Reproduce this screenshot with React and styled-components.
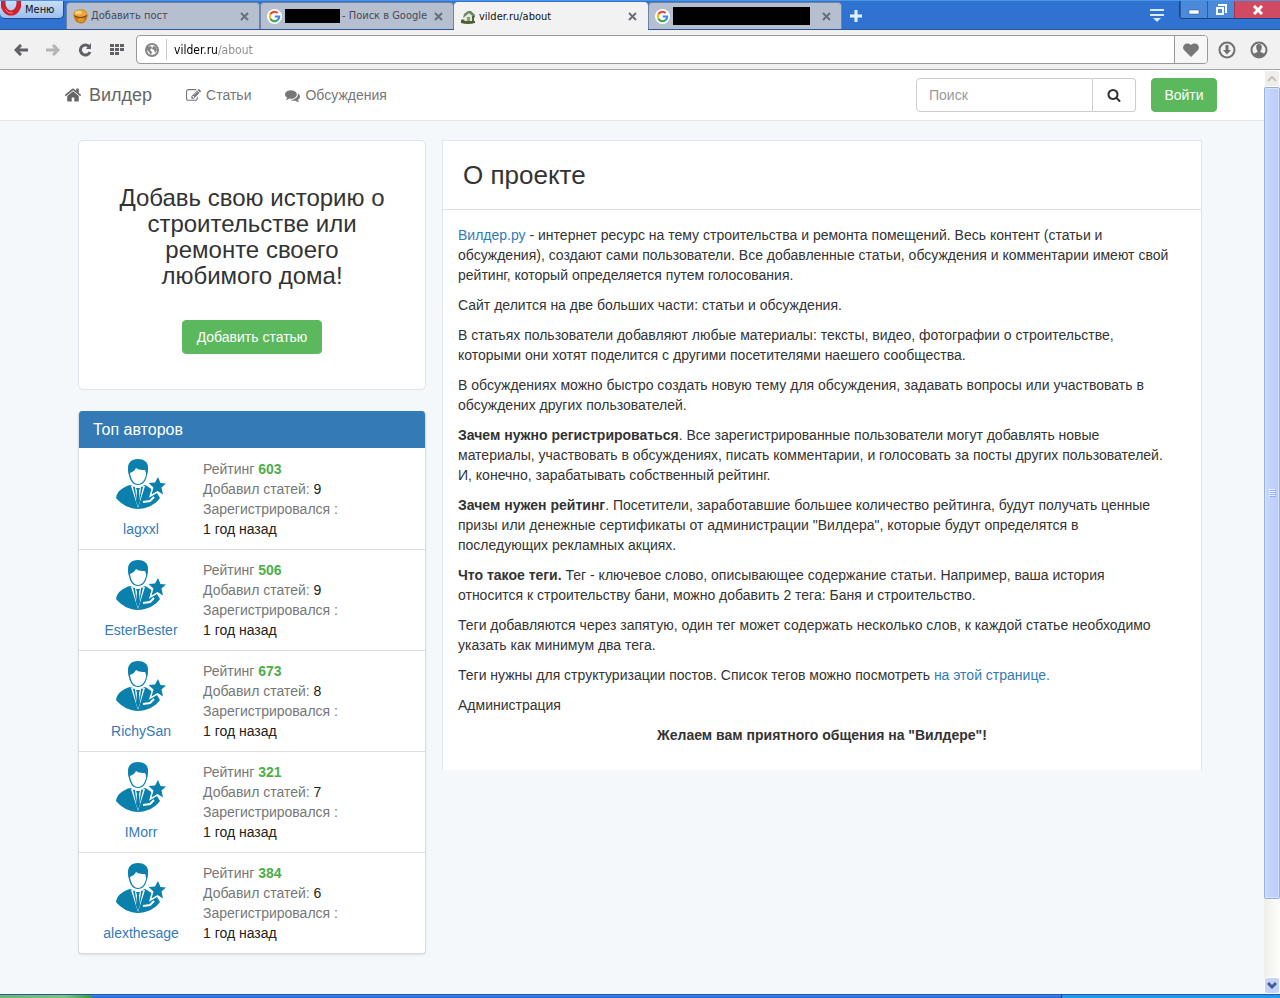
import React from 'react';
import styled, { createGlobalStyle } from 'styled-components';

const GlobalStyle = createGlobalStyle`
  *, *::before, *::after {
    box-sizing: border-box;
  }

  body {
    margin: 0;
    font-family: "Liberation Sans", Arial, sans-serif;
    font-size: 14px;
    line-height: 20px;
    color: #333;
    background: #f4f8fb;
  }

  button, input {
    font: inherit;
  }

  a {
    color: #337ab7;
    text-decoration: none;
  }
`;

const Screen = styled.div`
  display: flex;
  flex-direction: column;
  min-height: 100vh;
`;

/* Browser window */

const uiFont = '"DejaVu Sans Condensed", "DejaVu Sans", Tahoma, sans-serif';

const TitleBar = styled.header`
  display: flex;
  align-items: flex-start;
  height: 30px;
  background: #3072cf;
  border-top: 1px solid #4a95e6;
  border-bottom: 1px solid #2b5596;
  font-family: ${uiFont};
  font-size: 11px;
`;

const MenuButton = styled.button`
  display: flex;
  align-items: center;
  gap: 4px;
  width: 64px;
  height: 18px;
  padding: 0 0 0 1px;
  border: 1px solid #1f4c93;
  border-top: 0;
  border-left: 0;
  border-radius: 0 0 5px 5px;
  background: linear-gradient(#c9def8, #9dbfee);
  color: #111;
  overflow: hidden;
`;

const Tabs = styled.nav`
  display: flex;
  flex: 1;
  height: 29px;
  margin-left: 2px;
  padding-top: 1px;
`;

const Tab = styled.div`
  display: flex;
  align-items: center;
  flex: 0 1 194px;
  gap: 3px;
  height: ${p => (p.$active ? 28 : 27)}px;
  padding: 0 10px 0 6px;
  border: 1px solid ${p => (p.$active ? '#f2f2f2' : '#6d83a8')};
  border-bottom: 0;
  border-radius: 4px 4px 0 0;
  background: ${p => (p.$active ? '#f2f2f2' : '#b5bfd0')};
  color: ${p => (p.$active ? '#111' : '#444b57')};
  white-space: nowrap;
`;

const TabTitle = styled.span`
  display: flex;
  align-items: center;
  flex: 1;
  gap: 2px;
`;

const Redacted = styled.span`
  width: ${p => p.$width}px;
  height: ${p => p.$height}px;
  background: #000;
`;

const PlainButton = styled.button`
  display: flex;
  align-items: center;
  justify-content: center;
  padding: 0;
  border: 0;
  background: none;
  color: inherit;
`;

const NewTab = styled(PlainButton)`
  width: 28px;
  height: 27px;
`;

const TabMenu = styled(PlainButton)`
  width: 14px;
  height: 28px;
  margin-right: 15px;
`;

const WindowButtons = styled.div`
  display: flex;
  height: 18px;
  border: 1px solid #1c4588;
  border-width: 0 0 1px 1px;
  border-radius: 0 0 0 4px;
  overflow: hidden;
`;

const WindowButton = styled(PlainButton)`
  width: ${p => (p.$close ? 46 : 27)}px;
  background: ${p => (p.$close ? '#d04a62' : '#4b8ad9')};
  border-left: 1px solid ${p => (p.$close ? '#a03554' : '#2a5da9')};
`;

const Toolbar = styled.div`
  display: flex;
  align-items: center;
  height: 40px;
  padding: 0 11px;
  border-bottom: 1px solid #a5a5a5;
  background: #f1f1f1;
  font-family: ${uiFont};
  color: #5f6164;
`;

const ToolButtons = styled.div`
  display: flex;
  gap: 12px;
  margin-right: 9px;
`;

const ToolButton = styled(PlainButton)`
  width: 20px;
  height: 20px;
`;

const AddressBar = styled.label`
  display: flex;
  align-items: center;
  flex: 1;
  height: 29px;
  border: 1px solid #999;
  border-radius: 4px;
  background: #fff;
  overflow: hidden;
`;

const SiteBadge = styled.span`
  display: flex;
  justify-content: center;
  width: 30px;
  height: 21px;
  align-items: center;
  border-right: 1px solid #ccc;
`;

/* the host part is darker than the path */
const AddressInput = styled.input`
  flex: 1;
  min-width: 0;
  padding: 0 0 0 7px;
  border: 0;
  outline: 0;
  font-size: 12px;
  background: linear-gradient(90deg, #000 51px, #8a8a8a 51px);
  background-clip: text;
  color: transparent;
`;

const Favorite = styled(PlainButton)`
  width: 33px;
  height: 100%;
  border-left: 1px solid #999;
  background: #f6f6f6;
  color: #777;
`;

const ToolbarEnd = styled.div`
  display: flex;
  gap: 12px;
  margin-left: 9px;
  color: #707070;
`;

const Viewport = styled.div`
  display: flex;
  flex: 1;
`;

const Page = styled.div`
  flex: 1;
  min-width: 0;
`;

const Scrollbar = styled.div`
  display: flex;
  flex-direction: column;
  width: 16px;
  background: linear-gradient(90deg, #efefe9, #fdfdfa);
`;

const ScrollButton = styled(PlainButton)`
  height: 17px;
  border: 1px solid #fff;
  border-radius: 3px;
  background: ${p => (p.disabled ? '#efeee8' : '#c3d3fb')};
  color: ${p => (p.disabled ? '#c4c3bb' : '#43608d')};
`;

const ScrollTrack = styled.div`
  display: flex;
  flex-direction: column;
  flex: 1;
  padding-bottom: 78px;
`;

const ScrollThumb = styled.div`
  display: flex;
  align-items: center;
  justify-content: center;
  flex: 1;
  border: 1px solid #98aedd;
  border-radius: 2px;
  background: linear-gradient(90deg, #cbd8fd, #bacbfa);
  box-shadow: inset 0 0 0 1px #d6e2ff;
`;

const Taskbar = styled.footer`
  display: flex;
  height: 4px;
  border-top: 1px solid #2457ad;
  background: linear-gradient(#3f86ec, #2566d8);
`;

const StartEdge = styled.div`
  width: 92px;
  background: linear-gradient(90deg, #6fb56f, #7cc47a 70%, #3b9c35);
`;

const TrayEdge = styled.div`
  width: 219px;
  margin-left: auto;
  border-left: 1px solid #123f8c;
  background: #1c9bea;
`;

/* Site */

const NavBar = styled.nav`
  height: 51px;
  background: #fff;
  border-bottom: 1px solid #dde6ed;
`;

const NavInner = styled.div`
  display: flex;
  align-items: center;
  max-width: 1170px;
  height: 50px;
  margin: 0 auto;
  padding-left: 17px;
`;

const Brand = styled.a`
  display: flex;
  align-items: center;
  gap: 7px;
  margin-right: 34px;
  font-size: 18px;
  color: #666;
`;

const NavLink = styled.a`
  display: flex;
  align-items: center;
  gap: 5px;
  margin-right: 34px;
  color: #777;
`;

const Search = styled.form`
  display: flex;
  width: 220px;
  height: 34px;
  margin: 0 15px 0 auto;
`;

const SearchInput = styled.input`
  flex: 1;
  min-width: 0;
  padding: 0 12px;
  border: 1px solid #ccc;
  border-radius: 4px 0 0 4px;
  background: #fff;

  &::placeholder {
    color: #999;
    opacity: 1;
  }
`;

const SearchButton = styled(PlainButton)`
  width: 43px;
  border: 1px solid #ccc;
  border-left: 0;
  border-radius: 0 4px 4px 0;
  background: #fff;
  color: #333;
`;

const Button = styled.button`
  min-width: 66px;
  height: 34px;
  padding: 0 ${p => (p.$wide ? 14 : 12)}px;
  border: 1px solid #5cb85c;
  border-radius: 4px;
  background: #5cb85c;
  color: #fff;
`;

const Content = styled.main`
  display: grid;
  grid-template-columns: 348px minmax(0, 1fr);
  align-items: start;
  gap: 16px;
  max-width: 1170px;
  margin: 0 auto;
  padding: 19px 15px 40px 31px;
`;

const Sidebar = styled.aside`
  display: flex;
  flex-direction: column;
  gap: 21px;
`;

const Promo = styled.section`
  padding: 44px 36px 35px;
  border: 1px solid #dde6ee;
  border-radius: 5px;
  background: #fff;
  text-align: center;
`;

const PromoTitle = styled.h2`
  margin: 0 0 31px;
  font-size: 24px;
  font-weight: normal;
  line-height: 26px;
`;

const Authors = styled.section`
  border-radius: 4px;
  background: #fff;
  border: 1px solid #d5dde4;
  border-top: 0;
  box-shadow: 0 1px 2px rgba(0, 0, 0, 0.1);
  overflow: hidden;
`;

const AuthorsTitle = styled.h3`
  margin: 0;
  padding: 9px 14px 8px;
  background: #337ab7;
  color: #fff;
  font-size: 16px;
  font-weight: normal;
`;

const AuthorRow = styled.div`
  display: flex;
  padding: 11px 0 10px;

  & + & {
    padding-top: 10px;
    border-top: 1px solid #ddd;
  }
`;

const AuthorLink = styled.a`
  display: flex;
  flex-direction: column;
  align-items: center;
  gap: 10px;
  width: 124px;
`;

const AuthorInfo = styled.div`
  color: #777;
`;

const Rating = styled.b`
  color: #4cae4c;
`;

const Value = styled.span`
  color: #222;
`;

const About = styled.article`
  border: 1px solid #dde6ee;
  border-bottom: 0;
  background: #fff;
`;

const AboutTitle = styled.h1`
  margin: 0;
  padding: 21px 20px;
  border-bottom: 1px solid #dde3e8;
  font-size: 26px;
  font-weight: normal;
  line-height: 26px;
`;

const AboutText = styled.div`
  padding: 15px 15px 25px;
`;

const Paragraph = styled.p`
  margin: 0 0 10px;
  text-align: ${p => (p.$center ? 'center' : 'left')};

  &:last-child {
    margin-bottom: 0;
  }
`;

const glyphs = {
  home: 'M1472 992v480q0 26-19 45t-45 19h-384v-384h-256v384h-384q-26 0-45-19t-19-45v-480q0-1 .5-3t.5-3l575-474 575 474q1 2 1 6zm223-69l-62 74q-8 9-21 11h-3q-13 0-21-7l-692-577-692 577q-12 8-24 7-13-2-21-11l-62-74q-8-10-7-23.5t11-21.5l719-599q32-26 76-26t76 26l244 204v-195q0-14 9-23t23-9h192q14 0 23 9t9 23v408l219 182q10 8 11 21.5t-7 23.5z',
  edit: 'M888 1184l116-116-152-152-116 116v56h96v96h56zm440-720q-16-16-33 1l-350 350q-17 17-1 33t33-1l350-350q17-17 1-33zm80 594v190q0 119-84.5 203.5t-203.5 84.5h-832q-119 0-203.5-84.5t-84.5-203.5v-832q0-119 84.5-203.5t203.5-84.5h832q63 0 117 25 15 7 18 23 3 17-9 29l-49 49q-14 14-32 8-23-6-45-6h-832q-66 0-113 47t-47 113v832q0 66 47 113t113 47h832q66 0 113-47t47-113v-126q0-13 9-22l64-64q15-15 35-7t20 29zm-96-738l288 288-672 672h-288v-288zm444 132l-92 92-288-288 92-92q28-28 68-28t68 28l152 152q28 28 28 68t-28 68z',
  comments: 'M1408 768q0 139-94 257t-256.5 186.5-353.5 68.5q-86 0-176-16-124 88-278 128-36 9-86 16h-3q-11 0-20.5-8t-11.5-21q-1-3-1-6.5t.5-6.5 2-6l2.5-5 3.5-5.5 4-5 4.5-5 4-4.5q5-6 23-25t26-29.5 22.5-29 25-38.5 20.5-44q-124-72-195-177t-71-224q0-139 94-257t256.5-186.5 353.5-68.5 353.5 68.5 256.5 186.5 94 257zm384 256q0 120-71 224.5t-195 176.5q10 24 20.5 44t25 38.5 22.5 29 26 29.5 23 25q1 1 4 4.5t4.5 5 4 5 3.5 5.5l2.5 5 2 6 .5 6.5-1 6.5q-3 14-13 22t-22 7q-50-7-86-16-154-40-278-128-90 16-176 16-271 0-472-132 58 4 88 4 161 0 309-45t264-129q125-92 192-212t67-254q0-77-23-152 129 71 204 178t75 230z',
  search: 'M1216 832q0-185-131.5-316.5t-316.5-131.5-316.5 131.5-131.5 316.5 131.5 316.5 316.5 131.5 316.5-131.5 131.5-316.5zm512 832q0 52-38 90t-90 38q-54 0-90-38l-343-342q-179 124-399 124-143 0-273.5-55.5t-225-150-150-225-55.5-273.5 55.5-273.5 150-225 225-150 273.5-55.5 273.5 55.5 225 150 150 225 55.5 273.5q0 220-124 399l343 343q37 37 37 90z',
};

const Glyph = ({ name, size = 14 }) => (
  <svg width={size} height={size} viewBox="0 0 1792 1792" fill="currentColor" aria-hidden="true">
    <path d={glyphs[name]} />
  </svg>
);

const OperaIcon = () => (
  <svg width="20" height="17" viewBox="0 0 20 17" aria-hidden="true">
    <ellipse cx="10" cy="2" rx="8" ry="10" fill="none" stroke="#d3202d" strokeWidth="5" />
    <path d="M4 8q3 5 8 4" fill="none" stroke="#f0808a" strokeWidth="1" />
  </svg>
);

const GoogleIcon = () => (
  <svg width="15" height="15" viewBox="0 0 14 14" aria-hidden="true">
    <circle cx="7" cy="7" r="7" fill="#fff" />
    <g fill="none" strokeWidth="2">
      <path d="M10 3.8A4.4 4.4 0 0 0 3.2 4.8" stroke="#ea4335" />
      <path d="M3.2 4.8a4.4 4.4 0 0 0 0 4.4" stroke="#fbbc05" />
      <path d="M3.2 9.2a4.4 4.4 0 0 0 6.6 1.2" stroke="#34a853" />
      <path d="M9.8 10.4A4.4 4.4 0 0 0 11.4 7H7.2" stroke="#4285f4" />
    </g>
  </svg>
);

const CakeIcon = () => (
  <svg width="15" height="15" viewBox="0 0 15 15" aria-hidden="true">
    <path d="M0.500 5c0-3 3-4.500 7-4.500s7 2 7 5.500-2 8.500-6.500 8.500S1 11 .5 5z" fill="#c47a14" />
    <path d="M1 5c0-2 3-4 6-4s7 2 7 4-3 3-6.500 3S1 7 1 5z" fill="#eda53a" />
    <ellipse cx="5.500" cy="3.500" rx="3.500" ry="1.700" fill="#f9d583" />
    <path d="M1 6.500q6 4 13 0" fill="none" stroke="#6e3b0a" />
    <ellipse cx="8" cy="11" rx="3.500" ry="2" fill="#dd9a2f" />
  </svg>
);

const HouseIcon = () => (
  <svg width="15" height="14" viewBox="0 0 15 14" aria-hidden="true">
    <path d="M3 6l5-4 5 4v6H3z" fill="#e4e7d8" />
    <path d="M2 8l1-4 4-3h3l4 4v3l-6-5z" fill="#6b8362" />
    <path d="M6 7h3v5H6z" fill="#8b9c7a" />
    <path d="M12 6v6" stroke="#4e6448" strokeWidth="2" />
    <path d="M0 10q2-2 4 1 5 0 10 0v2q-7 2-14 0z" fill="#4c5f33" />
  </svg>
);

const CloseIcon = () => (
  <svg width="9" height="9" viewBox="0 0 9 9" stroke="#6a6e76" strokeWidth="2" aria-hidden="true">
    <path d="M1 1l7 7M8 1l-7 7" />
  </svg>
);

const Person = () => (
  <svg width="50" height="50" viewBox="0 0 50 50" aria-hidden="true">
    <path
      fill="#0b80ad"
      d="M22 0c-7 0-10 4-10 9 0 3 0 5 1 7 1 6 4 10 9 10s8-4 9-10c1-2 1-5 1-8C32 3 28 0 22 0z"
    />
    <path fill="#fff" d="M14 14c3-1 5-3 6-5 3 2 6 2 9 2 1 2 1 3 1 5-1 5-4 9-8 9s-7-4-8-11z" />
    <path
      fill="#0b80ad"
      d="M14 26C7 28 1 32 0 39c6 7 14 11 22 11s17-4 22-11l-3-5-10-7-2-1-7 3z"
    />
    <path fill="#fff" d="M15 27l7 22 7-22-7 1z" />
    <path fill="#0b80ad" d="M17 28l2 0 2 17zM27 28l-2 0-2 17z" />
    <path fill="#0b80ad" d="M20 29h4l-1 3 1 10-2 6-2-6 1-10z" />
    <path fill="none" stroke="#fff" strokeWidth="2" d="M27 43l7-1 4-4" />
    <path
      fill="#0b80ad"
      stroke="#fff"
      strokeWidth="3"
      paintOrder="stroke"
      d="M42 18l2.500 6 5.500.5-4.500 4 1.500 7-5.500-3.500-6 3.500 2-7-5-4.500 6.500-.5z"
    />
  </svg>
);

const BrowserTab = ({ icon, active, children }) => (
  <Tab $active={active}>
    {icon}
    <TabTitle>{children}</TabTitle>
    <PlainButton aria-label="Закрыть вкладку">
      <CloseIcon />
    </PlainButton>
  </Tab>
);

const BrowserTitle = () => (
  <TitleBar>
    <MenuButton>
      <OperaIcon />
      Меню
    </MenuButton>
    <Tabs>
      <BrowserTab icon={<CakeIcon />}>Добавить пост</BrowserTab>
      <BrowserTab icon={<GoogleIcon />}>
        <Redacted $width={55} $height={14} />
        - Поиск в Google
      </BrowserTab>
      <BrowserTab icon={<HouseIcon />} active>vilder.ru/about</BrowserTab>
      <BrowserTab icon={<GoogleIcon />}>
        <Redacted $width={137} $height={18} />
      </BrowserTab>
      <NewTab aria-label="Новая вкладка">
        <svg width="12" height="12" viewBox="0 0 12 12" stroke="#e4f1ff" strokeWidth="3">
          <path d="M6 0v12M0 6h12" />
        </svg>
      </NewTab>
    </Tabs>
    <TabMenu aria-label="Меню вкладок">
      <svg width="14" height="13" viewBox="0 0 14 13" fill="#d9ebff">
        <path d="M0 0h14v2H0zM0 5h14v2H0zM3 9h8l-4 4z" />
      </svg>
    </TabMenu>
    <WindowButtons>
      <WindowButton aria-label="Свернуть">
        <svg width="12" height="12" viewBox="0 0 12 12">
          <path d="M1 6h10v4H1z" fill="#fff" stroke="#254c8a" strokeWidth="0.500" />
        </svg>
      </WindowButton>
      <WindowButton aria-label="Развернуть">
        <svg width="12" height="12" viewBox="0 0 12 12" fill="none" stroke="#fff" strokeWidth="2">
          <path d="M4 2V1h7v7h-1M2 4h6v6H2z" />
        </svg>
      </WindowButton>
      <WindowButton $close aria-label="Закрыть">
        <svg width="10" height="10" viewBox="0 0 10 10" stroke="#fff" strokeWidth="3">
          <path d="M1 1l8 8M9 1l-8 8" />
        </svg>
      </WindowButton>
    </WindowButtons>
  </TitleBar>
);

const BrowserToolbar = () => (
  <Toolbar>
    <ToolButtons>
      <ToolButton aria-label="Назад">
        <svg width="14" height="12" viewBox="0 0 14 12" fill="none" stroke="currentColor" strokeWidth="3">
          <path d="M14 6H3M7 1L2 6l5 5" />
        </svg>
      </ToolButton>
      <ToolButton aria-label="Вперёд">
        <svg width="14" height="12" viewBox="0 0 14 12" fill="none" stroke="#b4b4b4" strokeWidth="3">
          <path d="M0 6h11M7 1l5 5-5 5" />
        </svg>
      </ToolButton>
      <ToolButton aria-label="Обновить">
        <svg width="14" height="14" viewBox="0 0 14 14">
          <path d="M11 3.500A5 5 0 1 0 12 9" fill="none" stroke="currentColor" strokeWidth="3" />
          <path d="M13 0v6H8z" fill="currentColor" />
        </svg>
      </ToolButton>
      <ToolButton aria-label="Экспресс-панель">
        <svg width="14" height="12" viewBox="0 0 14 12" fill="currentColor">
          <path d="M0 0h4v3H0zM5 0h4v3H5zM10 0h4v3h-4zM0 4h4v3H0zM5 4h4v3H5zM10 4h4v3h-4zM0 8h4v3H0zM5 8h4v3H5z" />
        </svg>
      </ToolButton>
    </ToolButtons>
    <AddressBar>
      <SiteBadge>
        <svg width="14" height="14" viewBox="0 0 14 14">
          <circle cx="7" cy="7" r="6" fill="#fff" stroke="#858585" strokeWidth="2" />
          <path d="M2 4l4-1 1 2-2 2 2 2-1 3-2-3-2-2zM8 3l3 1 1 3-2 3-1-3-2-1z" fill="#858585" />
        </svg>
      </SiteBadge>
      <AddressInput aria-label="Адрес" defaultValue="vilder.ru/about" />
      <Favorite aria-label="В закладки">
        <svg width="16" height="14" viewBox="0 0 16 14" fill="currentColor">
          <path d="M8 14L1 7C-2 3 3-2 8 2c5-4 10 1 7 5z" />
        </svg>
      </Favorite>
    </AddressBar>
    <ToolbarEnd>
      <ToolButton aria-label="Загрузки">
        <svg width="18" height="18" viewBox="0 0 18 18">
          <circle cx="9" cy="9" r="7.500" fill="none" stroke="currentColor" strokeWidth="2" />
          <path d="M7.500 4h3v5h2.500l-4 4.500L5 9h2.500z" fill="currentColor" />
        </svg>
      </ToolButton>
      <ToolButton aria-label="Профиль">
        <svg width="18" height="18" viewBox="0 0 18 18">
          <circle cx="9" cy="9" r="7.500" fill="none" stroke="currentColor" strokeWidth="2" />
          <path d="M9 3c-4 0-3 5-1.500 7v1L3 13q6 6 12 0l-4.500-2v-1C12 8 13 3 9 3z" fill="currentColor" />
        </svg>
      </ToolButton>
    </ToolbarEnd>
  </Toolbar>
);

const BrowserScroll = () => (
  <Scrollbar>
    <ScrollButton disabled aria-label="Вверх">
      <svg width="10" height="6" viewBox="0 0 10 6" fill="none" stroke="currentColor" strokeWidth="2">
        <path d="M1 5l4-4 4 4" />
      </svg>
    </ScrollButton>
    <ScrollTrack>
      <ScrollThumb>
        <svg width="7" height="8" viewBox="0 0 7 8">
          <path d="M0 0h6v1H0zM0 2h6v1H0zM0 4h6v1H0zM0 6h6v1H0z" fill="#eef4fe" />
          <path d="M1 1h6v1H1zM1 3h6v1H1zM1 5h6v1H1zM1 7h6v1H1z" fill="#8cb0f8" />
        </svg>
      </ScrollThumb>
    </ScrollTrack>
    <ScrollButton aria-label="Вниз">
      <svg width="10" height="7" viewBox="0 0 10 7" fill="none" stroke="currentColor" strokeWidth="3">
        <path d="M1 1l4 4 4-4" />
      </svg>
    </ScrollButton>
  </Scrollbar>
);

const SiteNav = () => (
  <NavBar>
    <NavInner>
      <Brand href="#home">
        <Glyph name="home" size={18} />
        Вилдер
      </Brand>
      <NavLink href="#articles">
        <Glyph name="edit" size={15} />
        Статьи
      </NavLink>
      <NavLink href="#talks">
        <Glyph name="comments" size={15} />
        Обсуждения
      </NavLink>
      <Search onSubmit={e => e.preventDefault()}>
        <SearchInput type="text" placeholder="Поиск" aria-label="Поиск" />
        <SearchButton aria-label="Искать">
          <Glyph name="search" />
        </SearchButton>
      </Search>
      <Button>Войти</Button>
    </NavInner>
  </NavBar>
);

const authors = [
  { name: 'lagxxl', rating: 603, articles: 9 },
  { name: 'EsterBester', rating: 506, articles: 9 },
  { name: 'RichySan', rating: 673, articles: 8 },
  { name: 'IMorr', rating: 321, articles: 7 },
  { name: 'alexthesage', rating: 384, articles: 6 },
];

const Author = ({ name, rating, articles }) => (
  <AuthorRow>
    <AuthorLink href={`#${name}`}>
      <Person />
      {name}
    </AuthorLink>
    <AuthorInfo>
      <div>Рейтинг <Rating>{rating}</Rating></div>
      <div>Добавил статей: <Value>{articles}</Value></div>
      <div>Зарегистрировался :</div>
      <Value>1 год назад</Value>
    </AuthorInfo>
  </AuthorRow>
);

const AboutProject = () => (
  <About>
    <AboutTitle>О проекте</AboutTitle>
    <AboutText>
      <Paragraph>
        <a href="#home">Вилдер.ру</a> - интернет ресурс на тему строительства и ремонта помещений. Весь
        контент (статьи и<br />
        обсуждения), создают сами пользователи. Все добавленные статьи, обсуждения и комментарии имеют
        свой<br />
        рейтинг, который определяется путем голосования.
      </Paragraph>
      <Paragraph>Сайт делится на две больших части: статьи и обсуждения.</Paragraph>
      <Paragraph>
        В статьях пользователи добавляют любые материалы: тексты, видео, фотографии о строительстве,<br />
        которыми они хотят поделится с другими посетителями наешего сообщества.
      </Paragraph>
      <Paragraph>
        В обсуждениях можно быстро создать новую тему для обсуждения, задавать вопросы или участвовать в
        обсуждених других пользователей.
      </Paragraph>
      <Paragraph>
        <b>Зачем нужно регистрироваться</b>. Все зарегистрированные пользователи могут добавлять новые<br />
        материалы, участвовать в обсуждениях, писать комментарии, и голосовать за посты других
        пользователей.<br />
        И, конечно, зарабатывать собственный рейтинг.
      </Paragraph>
      <Paragraph>
        <b>Зачем нужен рейтинг</b>. Посетители, заработавшие большее количество рейтинга, будут получать
        ценные<br />
        призы или денежные сертификаты от администрации "Вилдера", которые будут определятся в<br />
        последующих рекламных акциях.
      </Paragraph>
      <Paragraph>
        <b>Что такое теги.</b> Тег - ключевое слово, описывающее содержание статьи. Например, ваша
        история<br />
        относится к строительству бани, можно добавить 2 тега: Баня и строительство.
      </Paragraph>
      <Paragraph>
        Теги добавляются через запятую, один тег может содержать несколько слов, к каждой статье
        необходимо<br />
        указать как минимум два тега.
      </Paragraph>
      <Paragraph>
        Теги нужны для структуризации постов. Список тегов можно посмотреть{' '}
        <a href="#tags">на этой странице.</a>
      </Paragraph>
      <Paragraph>Администрация</Paragraph>
      <Paragraph $center>
        <b>Желаем вам приятного общения на "Вилдере"!</b>
      </Paragraph>
    </AboutText>
  </About>
);

const App = () => (
  <Screen>
    <GlobalStyle />
    <BrowserTitle />
    <BrowserToolbar />
    <Viewport>
      <Page>
        <SiteNav />
        <Content>
          <Sidebar>
            <Promo>
              <PromoTitle>Добавь свою историю о строительстве или ремонте своего любимого дома!</PromoTitle>
              <Button $wide>Добавить статью</Button>
            </Promo>
            <Authors>
              <AuthorsTitle>Топ авторов</AuthorsTitle>
              {authors.map(author => <Author key={author.name} {...author} />)}
            </Authors>
          </Sidebar>
          <AboutProject />
        </Content>
      </Page>
      <BrowserScroll />
    </Viewport>
    <Taskbar>
      <StartEdge />
      <TrayEdge />
    </Taskbar>
  </Screen>
);

export default App;
